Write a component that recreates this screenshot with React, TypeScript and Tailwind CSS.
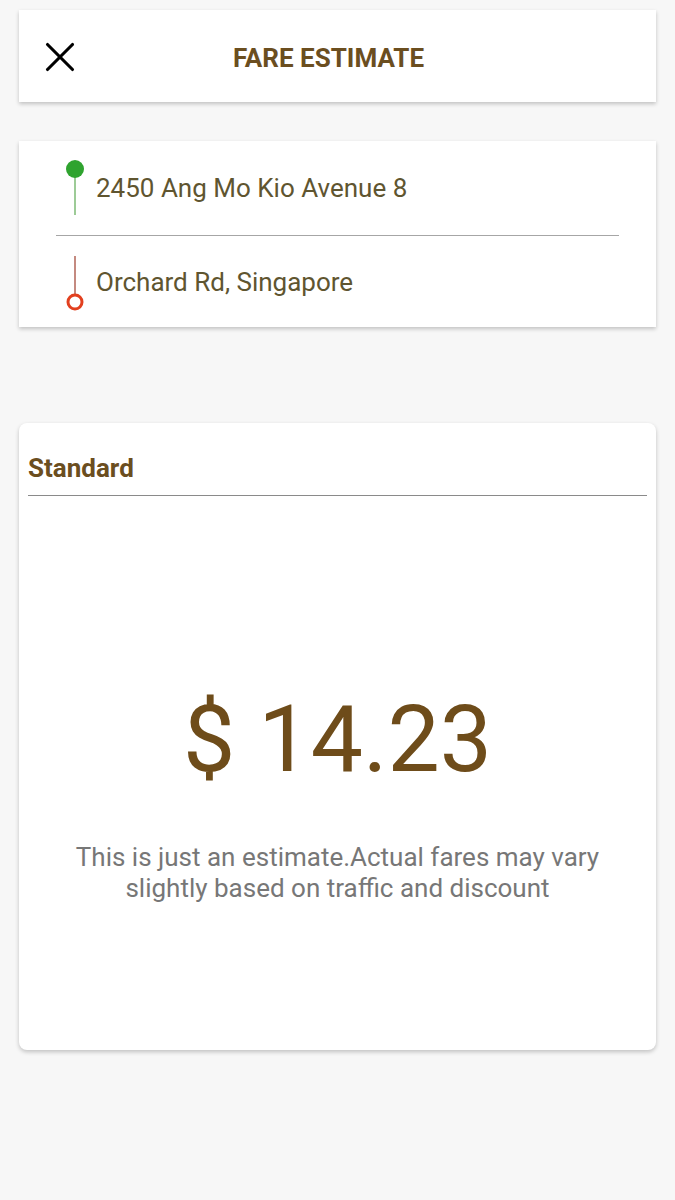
import { X } from 'lucide-react';

const brown = 'text-[#6b4e1f]';

const PickupPin = () => (
  <svg width="20" height="58" viewBox="0 0 20 58">
    <line x1="10" y1="14" x2="10" y2="56" stroke="#9dcb97" strokeWidth="2" />
    <circle cx="10" cy="10" r="9" fill="#2fa32f" />
  </svg>
);

const DropPin = () => (
  <svg width="20" height="56" viewBox="0 0 20 56">
    <line x1="10" y1="0" x2="10" y2="40" stroke="#c48a80" strokeWidth="2" />
    <circle cx="10" cy="46" r="7" fill="white" stroke="#e2401f" strokeWidth="3" />
  </svg>
);

export default function App() {
  return (
    <div
      className="min-h-[1200px] bg-[#f7f7f7] pt-[10px]"
      style={{ fontFamily: 'Roboto, "Liberation Sans", sans-serif' }}
    >
      {/* header */}
      <div className="relative mx-[19px] flex h-[92px] items-center justify-center bg-white pt-[4px] pr-[18px] shadow-[0_2px_4px_rgba(0,0,0,0.22)]">
        <X className="absolute left-[16px] top-[22px] text-black" size={50} strokeWidth={1.5} />
        <h1 className={`text-[26px] font-bold ${brown}`}>FARE ESTIMATE</h1>
      </div>

      {/* route */}
      <div className="mx-[19px] mt-[39px] bg-white shadow-[0_2px_4px_rgba(0,0,0,0.22)]">
        <div className="flex h-[94px] items-center pl-[46px]">
          <div className="flex w-[31px] items-center">
            <PickupPin />
          </div>
          <span className="text-[26px] text-[#5f5530]">2450 Ang Mo Kio Avenue 8</span>
        </div>
        <div className="mx-[37px] h-px bg-[#a6a6a6]" />
        <div className="flex h-[91px] items-center pt-[2px] pl-[46px]">
          <div className="flex w-[31px] items-center pt-[2px]">
            <DropPin />
          </div>
          <span className="text-[26px] text-[#5f5530]">Orchard Rd, Singapore</span>
        </div>
      </div>

      {/* fare card */}
      <div className="mx-[19px] mt-[96px] h-[627px] rounded-lg bg-white px-[9px] shadow-[0_2px_4px_rgba(0,0,0,0.22)]">
        <div className={`pt-[30px] pb-[12px] text-[26px] font-bold leading-[30px] ${brown}`}>Standard</div>
        <div className="h-px bg-[#8a8a8a]" />
        <div className="mt-[197px] flex flex-col items-center">
          <div className="text-[93px] leading-none text-[#6e4c1a]">$ 14.23</div>
          <p className="mt-[56px] max-w-[580px] text-center text-[26px] leading-[31px] text-[#777777]">
            This is just an estimate.Actual fares may vary slightly based on traffic and discount
          </p>
        </div>
      </div>
    </div>
  );
}
